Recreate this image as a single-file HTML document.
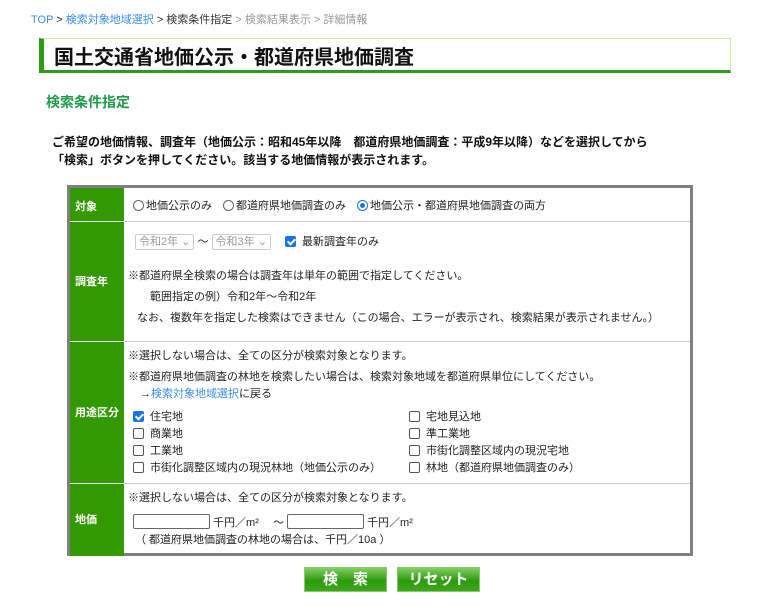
<!DOCTYPE html>
<html><head><meta charset="utf-8"><style>
*{margin:0;padding:0;box-sizing:border-box}
body{width:768px;height:613px;background:#fff;font-family:"Liberation Sans","Noto Sans CJK JP",sans-serif;color:#222;position:relative;overflow:hidden;font-size:11px}
.a{position:absolute;white-space:nowrap}
.bc{left:31px;top:11px;font-size:11px;color:#333}
.bc .l{color:#3a8ee6}.bc .g{color:#999}
.title{left:39px;top:38px;width:692px;height:35px;border-left:5px solid #2e9a1a;border-bottom:3px solid #2e9a1a;border-top:1px solid #c8f0a0;border-right:1px solid #c8f0a0}
.title span{position:absolute;left:10px;top:2px;font-size:20px;font-weight:bold;color:#111}
.sub{left:46px;top:92px;font-size:14px;font-weight:bold;color:#1f9a4a}
.p{left:52px;font-size:12px;font-weight:bold;color:#111}
.tbl{left:67px;top:185px;width:626px;height:371px;border:3px solid #808080;background:#fff}
.lab{position:absolute;left:0;width:54px;background:#339900;color:#fff;font-weight:bold;font-size:11px}
.lab span{position:absolute;left:5px}
.hr{position:absolute;left:54px;right:0;height:1px;background:#ccc}
.rad{display:inline-block;width:11px;height:11px;border:1px solid #666;border-radius:50%;vertical-align:-2px;margin-right:2px;background:#fff;position:relative}
.rad.on{border-color:#1a73e8}
.rad.on:after{content:"";position:absolute;left:2px;top:2px;width:5px;height:5px;border-radius:50%;background:#1a73e8}
.cb{display:inline-block;width:11px;height:11px;border:1px solid #555;border-radius:2px;vertical-align:-2px;margin-right:6px;background:#fff;position:relative}
.cb.on{background:#1a73e8;border-color:#1a73e8}
.cb.on:after{content:"";position:absolute;left:3px;top:0px;width:3px;height:6px;border:solid #fff;border-width:0 2px 2px 0;transform:rotate(45deg)}
.sel{display:inline-block;border:1px solid #ccc;color:#999;padding:0 3px;height:16px;line-height:14px;font-size:11px;border-radius:2px}
.inp{display:inline-block;width:77px;height:15px;border:1px solid #666;vertical-align:-3px;border-radius:2px}
.btn{top:567px;width:83px;height:25px;background:linear-gradient(#7fd060,#2e9a0e 55%,#3aa818);border:1px solid #8cc870;color:#fff;font-size:15px;font-weight:bold;text-align:center;line-height:23px}
a{color:#3a8ee6;text-decoration:none}
</style></head><body>
<div class="a bc"><span class="l">TOP</span> &gt; <span class="l">検索対象地域選択</span> &gt; 検索条件指定 <span class="g">&gt; 検索結果表示 &gt; 詳細情報</span></div>
<div class="a title"><span>国土交通省地価公示・都道府県地価調査</span></div>
<div class="a sub">検索条件指定</div>
<div class="a p" style="top:133px">ご希望の地価情報、調査年（地価公示：昭和45年以降　都道府県地価調査：平成9年以降）などを選択してから</div>
<div class="a p" style="top:151px">「検索」ボタンを押してください。該当する地価情報が表示されます。</div>

<div class="a tbl">
 <div class="lab" style="top:0;height:33px"><span style="top:10px">対象</span></div>
 <div class="lab" style="top:34px;height:119px"><span style="top:51px">調査年</span></div>
 <div class="lab" style="top:154px;height:141px"><span style="top:62px">用途区分</span></div>
 <div class="lab" style="top:296px;height:72px"><span style="top:27px">地価</span></div>
 <div class="hr" style="top:33px"></div><div class="hr" style="top:153px"></div><div class="hr" style="top:295px"></div>

 <div class="a" style="left:63px;top:9px"><span class="rad"></span>地価公示のみ　<span class="rad"></span>都道府県地価調査のみ　<span class="rad on"></span>地価公示・都道府県地価調査の両方</div>

 <div class="a" style="left:65px;top:45px"><span class="sel">令和2年 ⌄</span> ～ <span class="sel">令和3年 ⌄</span>　 <span class="cb on"></span>最新調査年のみ</div>
 <div class="a" style="left:58px;top:79px">※都道府県全検索の場合は調査年は単年の範囲で指定してください。</div>
 <div class="a" style="left:80px;top:100px">範囲指定の例）令和2年～令和2年</div>
 <div class="a" style="left:67px;top:121px">なお、複数年を指定した検索はできません（この場合、エラーが表示され、検索結果が表示されません。）</div>

 <div class="a" style="left:58px;top:159px">※選択しない場合は、全ての区分が検索対象となります。</div>
 <div class="a" style="left:58px;top:180px">※都道府県地価調査の林地を検索したい場合は、検索対象地域を都道府県単位にしてください。</div>
 <div class="a" style="left:70px;top:197px">→<a>検索対象地域選択</a>に戻る</div>
 <div class="a" style="left:63px;top:221px;line-height:17px"><span class="cb on"></span>住宅地<br><span class="cb"></span>商業地<br><span class="cb"></span>工業地<br><span class="cb"></span>市街化調整区域内の現況林地（地価公示のみ）</div>
 <div class="a" style="left:339px;top:221px;line-height:17px"><span class="cb"></span>宅地見込地<br><span class="cb"></span>準工業地<br><span class="cb"></span>市街化調整区域内の現況宅地<br><span class="cb"></span>林地（都道府県地価調査のみ）</div>

 <div class="a" style="left:58px;top:301px">※選択しない場合は、全ての区分が検索対象となります。</div>
 <div class="a" style="left:63px;top:326px"><span class="inp"></span> 千円／m² 　～ <span class="inp"></span> 千円／m²</div>
 <div class="a" style="left:65px;top:343px">（ 都道府県地価調査の林地の場合は、千円／10a ）</div>
</div>

<div class="a btn" style="left:304px">検　索</div>
<div class="a btn" style="left:397px">リセット</div>
</body></html>
